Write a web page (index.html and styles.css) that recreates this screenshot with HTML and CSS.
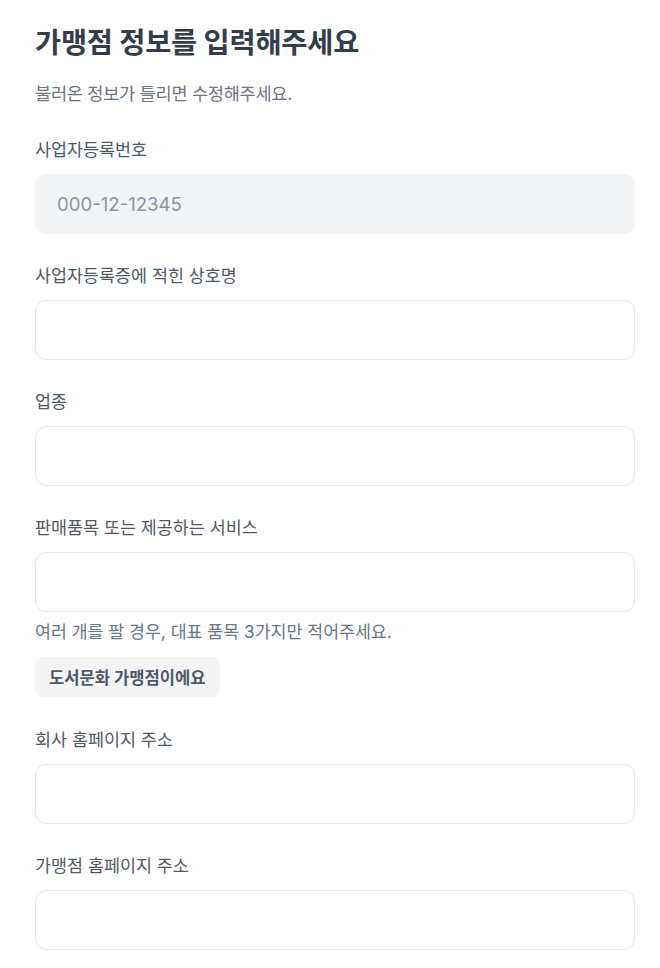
FILE: index.html
```html
<!DOCTYPE html>
<html lang="ko">
<head>
<meta charset="utf-8">
<link rel="stylesheet" href="styles.css">
</head>
<body>
<main class="page">
  <h1 class="title">가맹점 정보를 입력해주세요</h1>
  <p class="subtitle">불러온 정보가 틀리면 수정해주세요.</p>

  <div class="field field-first">
    <label class="label">사업자등록번호</label>
    <input class="input input-disabled" placeholder="000-12-12345" disabled>
  </div>

  <div class="field">
    <label class="label">사업자등록증에 적힌 상호명</label>
    <input class="input">
  </div>

  <div class="field">
    <label class="label">업종</label>
    <input class="input">
  </div>

  <div class="field field-chip">
    <label class="label">판매품목 또는 제공하는 서비스</label>
    <input class="input">
    <p class="helper">여러 개를 팔 경우, 대표 품목 3가지만 적어주세요.</p>
    <button class="chip" type="button">도서문화 가맹점이에요</button>
  </div>

  <div class="field">
    <label class="label">회사 홈페이지 주소</label>
    <input class="input">
  </div>

  <div class="field">
    <label class="label">가맹점 홈페이지 주소</label>
    <input class="input">
  </div>
</main>
</body>
</html>
```

FILE: styles.css
```css
* { box-sizing: border-box; }
html, body {
  margin: 0;
  padding: 0;
  background: #ffffff;
}
body {
  font-family: Inter, "Noto Sans CJK KR", "Noto Sans", sans-serif;
  color: #333d4b;
}
.page {
  width: 660px;
  padding: 25px 25px 0 35px;
  display: flex;
  flex-direction: column;
}
.title {
  margin: 0;
  font-size: 28.4px;
  line-height: 36px;
  font-weight: 700;
  color: #333d4b;
  letter-spacing: -0.2px;
}
.subtitle {
  margin: 20px 0 0;
  font-size: 17.6px;
  line-height: 26px;
  color: #6b7684;
  letter-spacing: -0.3px;
}
.field {
  display: flex;
  flex-direction: column;
  align-items: flex-start;
  margin-top: 30px;
}
.field-first { margin-top: 31px; }
.field-chip { margin-bottom: 1px; }
.label {
  font-size: 17.4px;
  line-height: 24px;
  color: #4e5968;
  margin-bottom: 12px;
}
.input {
  width: 600px;
  height: 60px;
  border: 1px solid #e5e8eb;
  border-radius: 11px;
  background: #ffffff;
  padding: 0 21px;
  font-family: inherit;
  font-size: 18.6px;
  color: #333d4b;
  outline: none;
}
.input-disabled {
  background: #f2f4f6;
  border-color: #f2f4f6;
}
.input::placeholder {
  color: #8b95a1;
}
.helper {
  margin: 8px 0 0;
  font-size: 17.3px;
  line-height: 24px;
  color: #6b7684;
}
.chip {
  margin-top: 13px;
  height: 40px;
  padding: 0 14px;
  border: none;
  border-radius: 8px;
  background: #f2f4f6;
  font-family: inherit;
  font-size: 16.6px;
  font-weight: 700;
  color: #4e5968;
}
```
